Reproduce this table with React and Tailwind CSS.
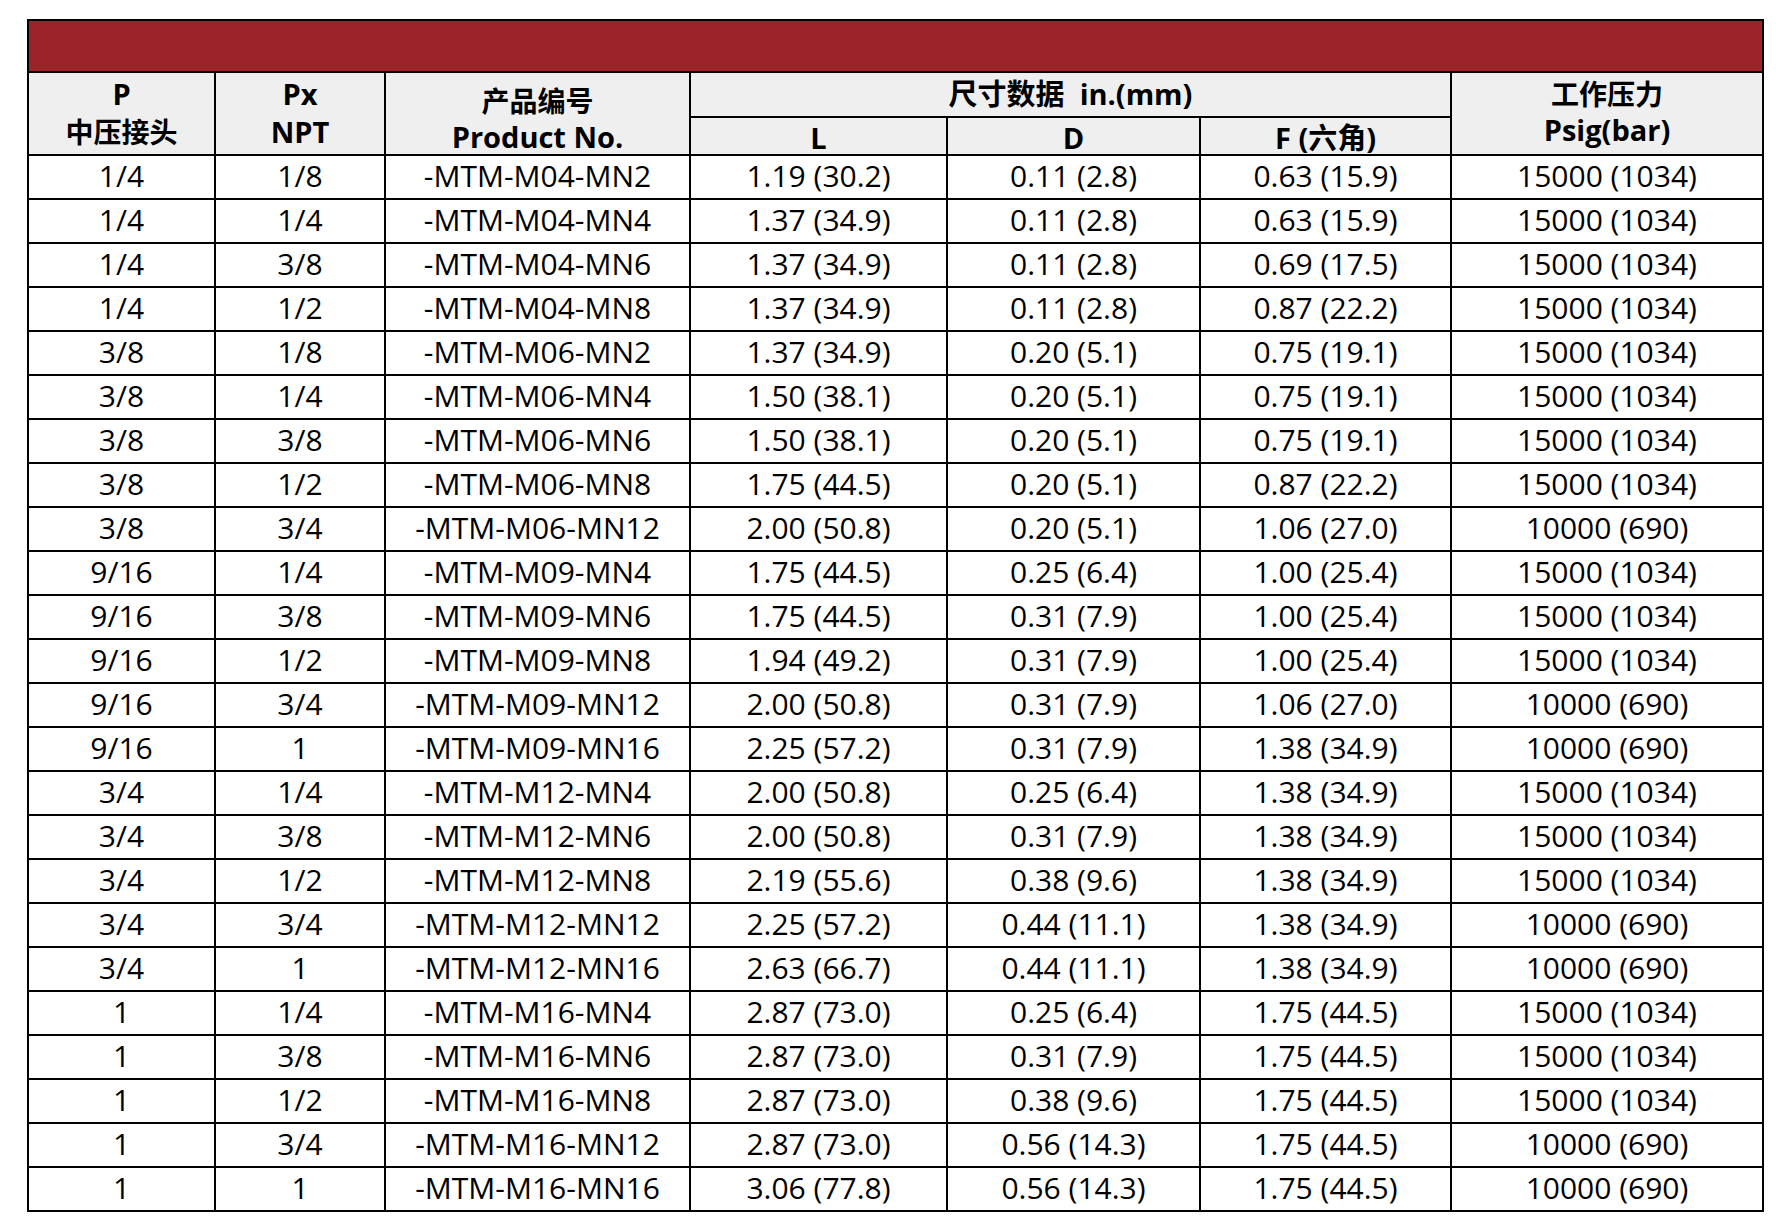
import React from 'react';

const rows = [
  ['1/4', '1/8', '-MTM-M04-MN2', '1.19 (30.2)', '0.11 (2.8)', '0.63 (15.9)', '15000 (1034)'],
  ['1/4', '1/4', '-MTM-M04-MN4', '1.37 (34.9)', '0.11 (2.8)', '0.63 (15.9)', '15000 (1034)'],
  ['1/4', '3/8', '-MTM-M04-MN6', '1.37 (34.9)', '0.11 (2.8)', '0.69 (17.5)', '15000 (1034)'],
  ['1/4', '1/2', '-MTM-M04-MN8', '1.37 (34.9)', '0.11 (2.8)', '0.87 (22.2)', '15000 (1034)'],
  ['3/8', '1/8', '-MTM-M06-MN2', '1.37 (34.9)', '0.20 (5.1)', '0.75 (19.1)', '15000 (1034)'],
  ['3/8', '1/4', '-MTM-M06-MN4', '1.50 (38.1)', '0.20 (5.1)', '0.75 (19.1)', '15000 (1034)'],
  ['3/8', '3/8', '-MTM-M06-MN6', '1.50 (38.1)', '0.20 (5.1)', '0.75 (19.1)', '15000 (1034)'],
  ['3/8', '1/2', '-MTM-M06-MN8', '1.75 (44.5)', '0.20 (5.1)', '0.87 (22.2)', '15000 (1034)'],
  ['3/8', '3/4', '-MTM-M06-MN12', '2.00 (50.8)', '0.20 (5.1)', '1.06 (27.0)', '10000 (690)'],
  ['9/16', '1/4', '-MTM-M09-MN4', '1.75 (44.5)', '0.25 (6.4)', '1.00 (25.4)', '15000 (1034)'],
  ['9/16', '3/8', '-MTM-M09-MN6', '1.75 (44.5)', '0.31 (7.9)', '1.00 (25.4)', '15000 (1034)'],
  ['9/16', '1/2', '-MTM-M09-MN8', '1.94 (49.2)', '0.31 (7.9)', '1.00 (25.4)', '15000 (1034)'],
  ['9/16', '3/4', '-MTM-M09-MN12', '2.00 (50.8)', '0.31 (7.9)', '1.06 (27.0)', '10000 (690)'],
  ['9/16', '1', '-MTM-M09-MN16', '2.25 (57.2)', '0.31 (7.9)', '1.38 (34.9)', '10000 (690)'],
  ['3/4', '1/4', '-MTM-M12-MN4', '2.00 (50.8)', '0.25 (6.4)', '1.38 (34.9)', '15000 (1034)'],
  ['3/4', '3/8', '-MTM-M12-MN6', '2.00 (50.8)', '0.31 (7.9)', '1.38 (34.9)', '15000 (1034)'],
  ['3/4', '1/2', '-MTM-M12-MN8', '2.19 (55.6)', '0.38 (9.6)', '1.38 (34.9)', '15000 (1034)'],
  ['3/4', '3/4', '-MTM-M12-MN12', '2.25 (57.2)', '0.44 (11.1)', '1.38 (34.9)', '10000 (690)'],
  ['3/4', '1', '-MTM-M12-MN16', '2.63 (66.7)', '0.44 (11.1)', '1.38 (34.9)', '10000 (690)'],
  ['1', '1/4', '-MTM-M16-MN4', '2.87 (73.0)', '0.25 (6.4)', '1.75 (44.5)', '15000 (1034)'],
  ['1', '3/8', '-MTM-M16-MN6', '2.87 (73.0)', '0.31 (7.9)', '1.75 (44.5)', '15000 (1034)'],
  ['1', '1/2', '-MTM-M16-MN8', '2.87 (73.0)', '0.38 (9.6)', '1.75 (44.5)', '15000 (1034)'],
  ['1', '3/4', '-MTM-M16-MN12', '2.87 (73.0)', '0.56 (14.3)', '1.75 (44.5)', '10000 (690)'],
  ['1', '1', '-MTM-M16-MN16', '3.06 (77.8)', '0.56 (14.3)', '1.75 (44.5)', '10000 (690)'],
];

const cell = 'border-r-2 border-b-2 border-black flex items-center justify-center';
const head = 'border-r-2 border-b-2 border-black bg-[#efefef] flex flex-col items-center justify-center font-bold';

export default function App() {
  return (
    <div className="min-h-screen bg-white pt-[19px] pl-[27px] text-black font-['Open_Sans','Noto_Sans_CJK_SC',sans-serif]">
      <div className="w-[1737px] grid grid-cols-[187px_170px_305px_257px_253px_251px_312px] grid-rows-[52px_45px_38px_repeat(24,44px)] border-l-2 border-t-2 border-black">
        {/* Red title bar */}
        <div className="col-span-7 bg-[#9c2328] border-r-2 border-b-2 border-black" />

        {/* Header */}
        <div className={`${head} row-span-2 text-[29px] leading-[38px] pb-[2px]`}>
          <span>P</span>
          <span className="text-[28px]">中压接头</span>
        </div>
        <div className={`${head} row-span-2 text-[29px] leading-[38px] pb-[2px]`}>
          <span>Px</span>
          <span>NPT</span>
        </div>
        <div className={`${head} row-span-2 text-[29px] pt-[10px] leading-[36px]`}>
          <span className="text-[28px]">产品编号</span>
          <span>Product No.</span>
        </div>
        <div className={`${head} col-span-3 text-[29px] leading-[36px] pb-[2px]`}>
          <span className="whitespace-pre">尺寸数据  in.(mm)</span>
        </div>
        <div className={`${head} row-span-2 text-[29px] leading-[36px] pb-[4px]`}>
          <span className="text-[28px]">工作压力</span>
          <span>Psig(bar)</span>
        </div>
        <div className={`${head} text-[29px] leading-none pt-[2px]`}>L</div>
        <div className={`${head} text-[29px] leading-none pt-[2px]`}>D</div>
        <div className={`${head} text-[29px] leading-none pt-[2px]`}>F (六角)</div>

        {/* Data rows */}
        {rows.map((r, i) =>
          r.map((v, j) => (
            <div key={`${i}-${j}`} className={`${cell} text-[30px] leading-none pb-[3px]`}>
              {v}
            </div>
          ))
        )}
      </div>
    </div>
  );
}
